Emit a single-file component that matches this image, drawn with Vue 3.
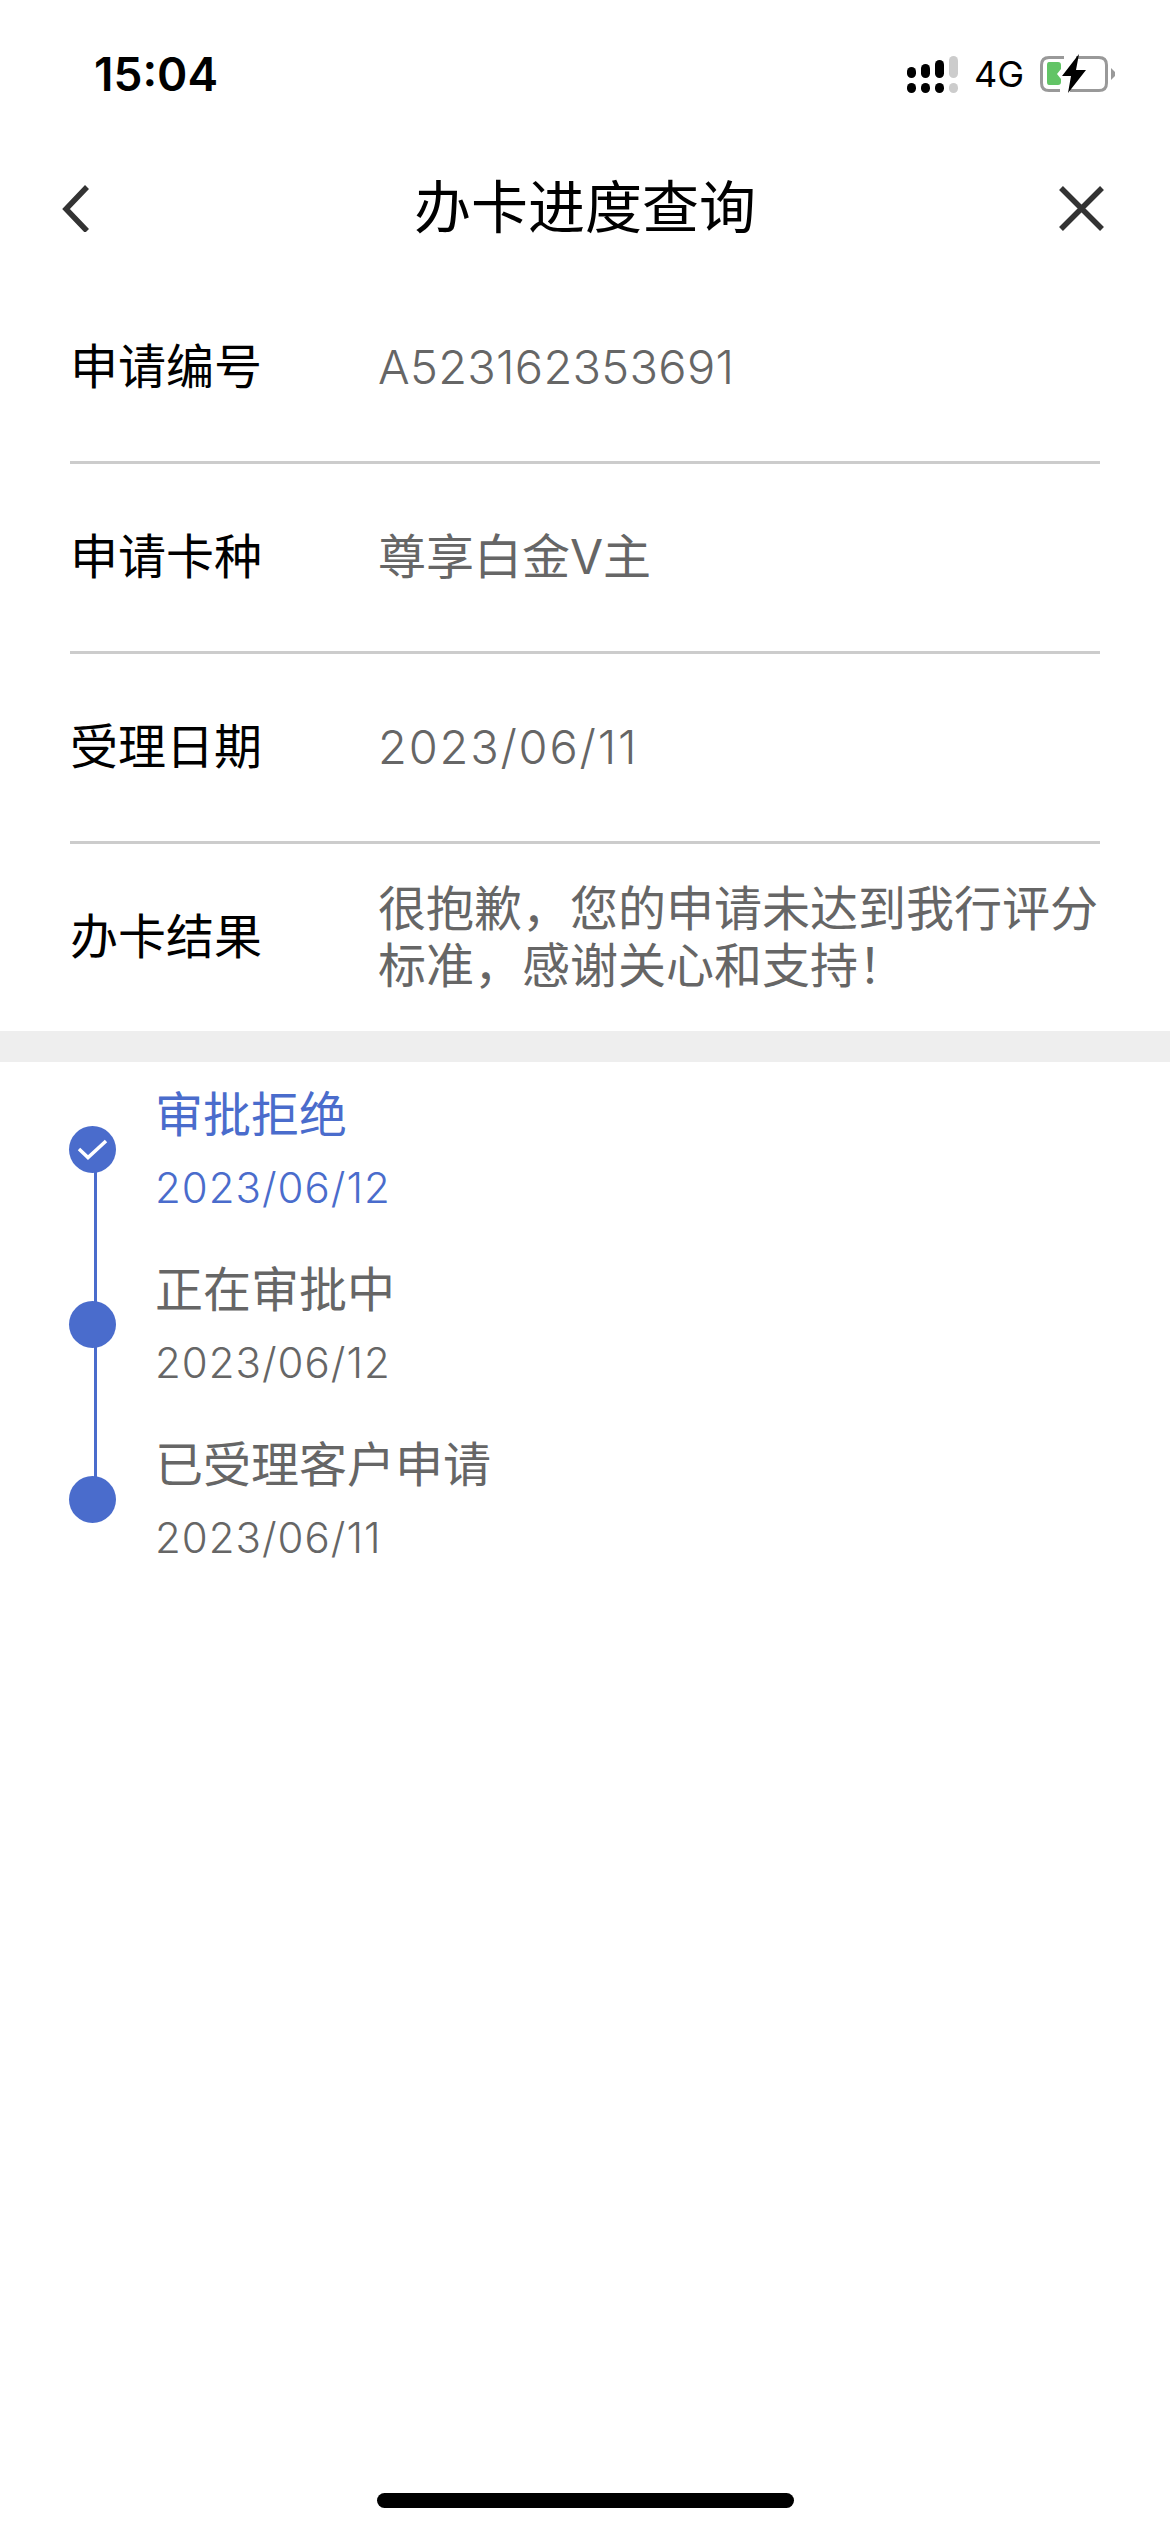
<template>
  <div class="app">
    <div class="status-bar">
      <span class="time">15:04</span>
      <div class="status-icons">
        <svg width="51" height="38" viewBox="0 0 51 38">
          <g fill="#000">
            <rect x="0" y="12" width="9" height="11" rx="4.5" />
            <rect x="14" y="9" width="9" height="14" rx="4.5" />
            <rect x="28" y="5" width="9" height="18" rx="4.5" />
            <rect x="0" y="28" width="9" height="10" rx="4.5" />
            <rect x="14" y="28" width="9" height="10" rx="4.5" />
            <rect x="28" y="28" width="9" height="10" rx="4.5" />
          </g>
          <g fill="#ccc">
            <rect x="42" y="1" width="9" height="22" rx="4.5" />
            <rect x="42" y="28" width="9" height="10" rx="4.5" />
          </g>
        </svg>
        <span class="net">4G</span>
        <svg width="75" height="40" viewBox="0 0 75 40">
          <path d="M24 3.5 H9 Q1.5 3.5 1.5 11 V29 Q1.5 36.5 9 36.5 H20 M36 3.5 H59 Q66.5 3.5 66.5 11 V29 Q66.5 36.5 59 36.5 H30" fill="none" stroke="#999" stroke-width="3" />
          <path d="M71 14 L75 18 V22 L71 26 Z" fill="#999" />
          <path d="M9 8 H18 Q21 8 21 11 V15 L17 20 L21 25 V28 Q21 31 18 31 H9 Q7 31 7 28 V11 Q7 8 9 8 Z" fill="#62c466" />
          <path d="M39 0 L22 22 H31 L28 39 L46 16 H36 Z" fill="#000" />
        </svg>
      </div>
    </div>

    <header class="nav">
      <svg width="46" height="48" viewBox="0 0 46 48">
        <path d="M27 3 L6 25 L27 47" fill="none" stroke="#333" stroke-width="5.5" />
      </svg>
      <h1>办卡进度查询</h1>
      <svg width="46" height="48" viewBox="0 0 46 48">
        <path d="M3 4 L44 45 M44 4 L3 45" fill="none" stroke="#333" stroke-width="5.5" />
      </svg>
    </header>

    <section class="info">
      <div v-for="row in rows" :key="row.label" class="info-row">
        <span class="label">{{ row.label }}</span>
        <span class="value" :class="row.kind">{{ row.value }}</span>
      </div>
      <div class="info-row result">
        <span class="label">办卡结果</span>
        <span class="value">很抱歉，您的申请未达到我行评分标准，感谢关心和支持！</span>
      </div>
    </section>

    <div class="band"></div>

    <section class="timeline">
      <div v-for="(step, i) in steps" :key="i" class="step" :class="{ current: i === 0 }">
        <div class="marker">
          <svg v-if="i === 0" width="31" height="21" viewBox="0 0 31 21">
            <path d="M2 10 L11 18.5 L29 2" fill="none" stroke="#fff" stroke-width="3.5" />
          </svg>
        </div>
        <div class="step-text">
          <div class="step-title">{{ step.title }}</div>
          <div class="step-date">{{ step.date }}</div>
        </div>
      </div>
    </section>

    <div class="home-bar"></div>
  </div>
</template>

<script setup>
const rows = [
  { label: '申请编号', value: 'A523162353691', kind: 'code' },
  { label: '申请卡种', value: '尊享白金V主' },
  { label: '受理日期', value: '2023/06/11', kind: 'date' }
]

const steps = [
  { title: '审批拒绝', date: '2023/06/12' },
  { title: '正在审批中', date: '2023/06/12' },
  { title: '已受理客户申请', date: '2023/06/11' }
]
</script>

<style>
html, body {
  margin: 0;
  background: #fff;
}
</style>

<style scoped>
.app {
  position: relative;
  height: 2532px;
  overflow: hidden;
  background: #fff;
  font-family: Inter, "Noto Sans CJK SC", sans-serif;
  color: #000;
}

.status-bar {
  height: 148px;
  display: flex;
  justify-content: space-between;
  align-items: center;
  padding: 0 55px 0 94px;
}

.time {
  font-size: 46px;
  font-weight: 600;
}

.status-icons {
  display: flex;
  align-items: center;
  gap: 16px;
}

.net {
  font-size: 36px;
}

.nav {
  height: 116px;
  display: flex;
  justify-content: space-between;
  align-items: center;
  padding: 2px 66px 0 60px;
}

.nav h1 {
  margin: -10px 0 0 6px;
  font-size: 57px;
  font-weight: 400;
}

.info {
  padding: 8px 70px 0;
}

.info-row {
  height: 185px;
  padding-bottom: 2px;
  display: flex;
  align-items: center;
  border-bottom: 3px solid #ccc;
}

.info-row.result {
  border-bottom: none;
}

.label {
  width: 308px;
  flex-shrink: 0;
  font-size: 48px;
  line-height: 57px;
}

.value {
  font-size: 48px;
  line-height: 57px;
  color: #666;
}

.value.code {
  font-size: 47px;
  font-weight: 300;
  letter-spacing: 0.3px;
}

.value.date {
  font-size: 47px;
  font-weight: 300;
  letter-spacing: 1.8px;
}

.band {
  height: 31px;
  background: #eee;
}

.timeline {
  padding-left: 69px;
}

.step {
  position: relative;
  height: 175px;
  display: flex;
  align-items: center;
  gap: 39px;
}

.step:not(:last-child)::before {
  content: "";
  position: absolute;
  left: 25px;
  top: 87px;
  width: 3px;
  height: 175px;
  background: #4a6ccc;
}

.marker {
  position: relative;
  width: 47px;
  height: 47px;
  flex-shrink: 0;
  border-radius: 50%;
  background: #4a6ccc;
  display: flex;
  align-items: center;
  justify-content: center;
}

.step-text {
  padding-top: 2px;
}

.step-title {
  font-size: 48px;
  line-height: 73px;
  color: #666;
}

.step-date {
  font-size: 42px;
  font-weight: 300;
  line-height: 73px;
  letter-spacing: 1px;
  color: #666;
}

.step.current .step-title,
.step.current .step-date {
  color: #4a6ccc;
}

.home-bar {
  position: absolute;
  left: 377px;
  bottom: 24px;
  width: 417px;
  height: 15px;
  border-radius: 8px;
  background: #000;
}
</style>
